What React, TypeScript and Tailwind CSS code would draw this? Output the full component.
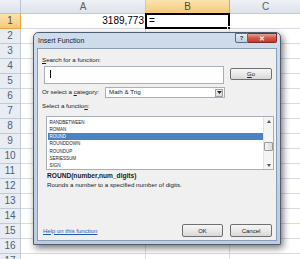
import React from "react";

const cols = [
  { key: "A", w: "w-[125px]" },
  { key: "B", w: "w-[84px]" },
  { key: "C", w: "w-[72px]" },
];

const rows = Array.from({ length: 17 }, (_, i) => i + 1);

function Cell({ col, row }: { col: string; row: number }) {
  const selected = col === "B" && row === 1;
  return (
    <div
      className={`relative h-[15px] shrink-0 border-r border-b border-[#d9dde3] bg-white ${
        col === "A" ? "w-[125px]" : col === "B" ? "w-[84px]" : "w-[72px]"
      }`}
    >
      {col === "A" && row === 1 && (
        <div className="flex h-full items-center justify-end pr-[1px] text-[10px] leading-none text-black">
          3189,773
        </div>
      )}
      {selected && (
        <>
          <div className="flex h-full items-center pl-[3px] text-[10px] leading-none text-black">=</div>
          <div className="absolute -left-[1px] -top-[1px] -right-[1px] -bottom-[1px] border-2 border-black" />
          <div className="absolute -right-[3px] -bottom-[3px] h-[5px] w-[5px] border border-white bg-black" />
        </>
      )}
    </div>
  );
}

function Sheet() {
  return (
    <div className="flex flex-col">
      <div className="flex h-[14px]">
        <div className="h-[14px] w-[21px] shrink-0 border-r border-b border-[#b9c4d3] bg-gradient-to-b from-[#eef1f5] to-[#dbe2ea]" />
        {cols.map((c) => (
          <div
            key={c.key}
            className={`flex h-[14px] shrink-0 items-center justify-center border-r border-b text-[10px] leading-none ${c.w} ${
              c.key === "B"
                ? "border-[#e2a93f] bg-gradient-to-b from-[#fbe3b0] to-[#f5c978] text-[#5b4a2a]"
                : "border-[#c0c9d6] bg-gradient-to-b from-[#eef1f5] to-[#dde3eb] text-[#55606e]"
            }`}
          >
            {c.key}
          </div>
        ))}
      </div>
      {rows.map((r) => (
        <div key={r} className="flex h-[15px]">
          <div
            className={`flex h-[15px] w-[21px] shrink-0 items-center justify-center border-r border-b text-[10px] leading-none ${
              r === 1
                ? "border-[#e2a93f] bg-gradient-to-b from-[#fbe3b0] to-[#f5c978] text-[#5b4a2a]"
                : "border-[#c0c9d6] bg-[#e8edf4] text-[#4f5e74]"
            }`}
          >
            {r}
          </div>
          {cols.map((c) => (
            <Cell key={c.key} col={c.key} row={r} />
          ))}
        </div>
      ))}
    </div>
  );
}

function Btn({ children, className = "" }: { children: React.ReactNode; className?: string }) {
  return (
    <div
      className={`flex items-center justify-center rounded-[2px] border border-[#707070] bg-gradient-to-b from-[#f6f6f6] via-[#e9e9e9] to-[#d8d8d8] text-[6px] leading-none text-[#222] ${className}`}
    >
      {children}
    </div>
  );
}

const items = ["RANDBETWEEN", "ROMAN", "ROUND", "ROUNDDOWN", "ROUNDUP", "SERIESSUM", "SIGN"];

function Dialog() {
  return (
    <div className="absolute left-[33px] top-[32px] flex h-[213px] w-[248px] flex-col rounded-t-[5px] border border-[#4f5d70] bg-gradient-to-b from-[#cfdcec] to-[#bccde2] shadow-[2px_3px_7px_rgba(0,0,0,0.55)]">
      {/* title bar */}
      <div className="flex h-[14px] shrink-0 items-start">
        <div className="pl-[4px] pt-[4px] text-[7px] leading-none text-[#1b1b1b]">Insert Function</div>
        <div className="ml-auto mr-[3px] flex">
          <div className="flex h-[10px] w-[13px] items-center justify-center rounded-bl-[2px] border border-[#5b6b80] bg-gradient-to-b from-[#e8eef6] to-[#bfcde0] text-[6px] font-bold leading-none text-[#333]">
            ?
          </div>
          <div className="flex h-[10px] w-[29px] items-center justify-center rounded-br-[2px] border border-l-0 border-[#7a2b25] bg-gradient-to-b from-[#e8a293] via-[#d2574a] to-[#c2392c] text-[7px] font-bold leading-none text-white">
            ✕
          </div>
        </div>
      </div>
      {/* body */}
      <div className="mx-[3px] mb-[3px] mt-[1px] flex flex-1 flex-col border border-[#8b9db4] bg-[#f0f0f0] pl-[4px] pr-[4px] pt-[6px] pb-[3px] text-[6.2px] text-[#1a1a1a]">
        <div className="h-[10px] leading-[10px]">
          <span className="underline">S</span>earch for a function:
        </div>
        <div className="mt-[1px] flex">
          <div className="ml-[2px] flex h-[18px] w-[181px] items-start border border-[#a8afb8] bg-white pl-[5px] pt-[3px]">
            <div className="h-[8px] w-[1px] bg-black" />
          </div>
          <Btn className="ml-[6px] mt-[2px] h-[12px] w-[42px]">
            <span className="underline">G</span>o
          </Btn>
        </div>
        <div className="mt-[3px] flex h-[11px] items-center">
          <div className="w-[63px] shrink-0 leading-none">
            Or select a <span className="underline">c</span>ategory:
          </div>
          <div className="flex h-[11px] w-[120px] items-center border border-[#a8afb8] bg-white pl-[3px]">
            <span className="leading-none">Math &amp; Trig</span>
            <div className="ml-auto mr-[1px] flex h-[8px] w-[8px] items-center justify-center border border-[#9aa2ad] bg-gradient-to-b from-[#f4f4f4] to-[#dcdcdc]">
              <svg width="5" height="3" viewBox="0 0 5 3">
                <path d="M0 0 L5 0 L2.5 3 Z" fill="#222" />
              </svg>
            </div>
          </div>
        </div>
        <div className="mt-[3px] h-[10px] leading-[10px]">
          Select a functio<span className="underline">n</span>:
        </div>
        <div className="ml-[4px] mt-[5px] flex h-[54px] w-[228px] border border-[#a8afb8] bg-white">
          <div className="flex flex-1 flex-col pt-[1px] pl-[1px]">
            {items.map((it) => (
              <div
                key={it}
                className={`flex h-[7.5px] items-center ${it === "ROUND" ? "bg-[#4a83c3] text-white" : "text-[#1a1a1a]"}`}
              >
                <span className="origin-left scale-x-[0.75] pl-[2px] text-[6px] leading-none">{it}</span>
              </div>
            ))}
          </div>
          <div className="flex w-[10px] flex-col items-center border-l border-[#e3e3e3] bg-[#f4f4f4]">
            <div className="flex h-[8px] items-center justify-center">
              <svg width="4" height="3" viewBox="0 0 4 3">
                <path d="M0 3 L4 3 L2 0 Z" fill="#555" />
              </svg>
            </div>
            <div className="mt-[17px] h-[9px] w-[9px] rounded-[1px] border border-[#9a9a9a] bg-gradient-to-r from-[#f3f3f3] to-[#dcdcdc]" />
            <div className="mt-auto flex h-[8px] items-center justify-center">
              <svg width="4" height="3" viewBox="0 0 4 3">
                <path d="M0 0 L4 0 L2 3 Z" fill="#555" />
              </svg>
            </div>
          </div>
        </div>
        <div className="ml-[5px] mt-[1px] h-[10px] text-[6.6px] font-bold leading-[10px]">ROUND(number,num_digits)</div>
        <div className="ml-[5px] h-[8px] leading-[8px]">Rounds a number to a specified number of digits.</div>
        <div className="flex-1" />
        <div className="flex h-[13px] items-center">
          <span className="ml-[1px] text-[6px] leading-none text-[#1c5bb8] underline">Help on this function</span>
          <Btn className="ml-auto h-[13px] w-[41px]">OK</Btn>
          <Btn className="ml-[7px] h-[13px] w-[42px]">Cancel</Btn>
        </div>
      </div>
    </div>
  );
}

export default function App() {
  return (
    <div className="relative h-[259px] w-[300px] overflow-hidden bg-white font-['Liberation_Sans',Arial,sans-serif]">
      <Sheet />
      <Dialog />
    </div>
  );
}
